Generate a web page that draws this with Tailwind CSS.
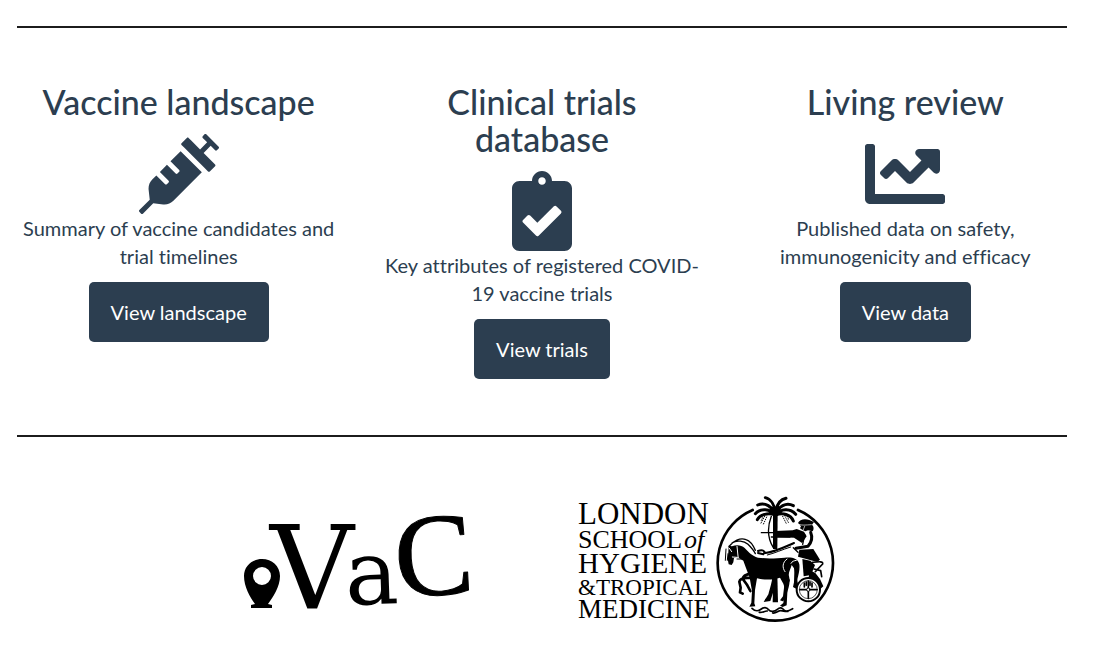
<!DOCTYPE html>
<html lang="en">
<head>
  <meta charset="UTF-8" />
  <meta name="viewport" content="width=device-width, initial-scale=1.0" />
  <title>COVID-19 vaccine tracker</title>
  <script src="https://cdn.jsdelivr.net/npm/@tailwindcss/browser@4"></script>
</head>
<body class="bg-white text-[#2c3e50] font-['Lato',sans-serif] text-[20px] leading-[28px] [font-variant-ligatures:none]">

  <main class="pt-[26px] pl-[17px] pr-[27px]">
    <hr class="border-t-2 border-[#1c1c1c]" />

    <!-- Sections -->
    <div class="grid grid-cols-3 gap-10 pt-[55px] pb-14 items-start text-center">
      <section class="flex flex-col items-center">
        <h2 class="text-[34px] leading-[37px] font-medium mb-[14px]">Vaccine landscape</h2>
        <svg class="size-20" viewBox="0 0 512 512" fill="currentColor" aria-hidden="true">
          <path d="M201.5 174.8l55.7 55.8c3.1 3.1 3.1 8.2 0 11.3l-11.3 11.3c-3.1 3.1-8.2 3.1-11.3 0l-55.7-55.8-45.3 45.3 55.8 55.8c3.1 3.1 3.1 8.2 0 11.3l-11.3 11.3c-3.1 3.1-8.2 3.1-11.3 0L111 265.2l-26.4 26.4c-17.3 17.3-25.6 41.1-23 65.4l7.1 63.6L2.3 487c-3.1 3.1-3.1 8.2 0 11.3l11.3 11.3c3.1 3.1 8.2 3.1 11.3 0l66.3-66.3 63.6 7.1c23.9 2.6 47.9-5.4 65.4-23l181.9-181.9-135.7-135.7-64.9 65zm308.2-93.3L430.5 2.3c-3.1-3.1-8.2-3.1-11.3 0l-11.3 11.3c-3.1 3.1-3.1 8.2 0 11.3l28.3 28.3-45.3 45.3-56.6-56.6-17-17c-3.1-3.1-8.2-3.1-11.3 0l-33.9 33.9c-3.1 3.1-3.1 8.2 0 11.3l17 17L424.8 223l17 17c3.1 3.1 8.2 3.1 11.3 0l33.9-34c3.1-3.1 3.1-8.2 0-11.3l-73.5-73.5 45.3-45.3 28.3 28.3c3.1 3.1 8.2 3.1 11.3 0l11.3-11.3c3.1-3.2 3.1-8.2 0-11.4z" />
        </svg>
        <p class="mb-3">Summary of vaccine candidates and trial timelines</p>
        <a href="#" class="bg-[#2c3e50] text-white px-[22px] py-4 rounded-[5px] hover:bg-[#1e2b37]">View landscape</a>
      </section>

      <section class="flex flex-col items-center">
        <h2 class="text-[34px] leading-[37px] font-medium mb-[14px]">Clinical trials database</h2>
        <svg class="size-20" viewBox="-64 0 512 512" fill="currentColor" aria-hidden="true">
          <path d="M336 64h-80c0-35.3-28.7-64-64-64s-64 28.7-64 64H48C21.5 64 0 85.5 0 112v352c0 26.5 21.5 48 48 48h288c26.5 0 48-21.5 48-48V112c0-26.5-21.5-48-48-48zM192 40c13.3 0 24 10.7 24 24s-10.7 24-24 24-24-10.7-24-24 10.7-24 24-24zm121.2 231.8l-143 141.8c-4.7 4.7-12.3 4.6-17-.1l-82.6-83.3c-4.7-4.7-4.6-12.3.1-17L99.1 285c4.7-4.7 12.3-4.6 17 .1l46 46.4 106-105.2c4.7-4.7 12.3-4.6 17 .1l28.2 28.4c4.7 4.8 4.6 12.3-.1 17z" />
        </svg>
        <p class="mb-3">Key attributes of registered COVID-19 vaccine trials</p>
        <a href="#" class="bg-[#2c3e50] text-white px-[22px] py-4 rounded-[5px] hover:bg-[#1e2b37]">View trials</a>
      </section>

      <section class="flex flex-col items-center">
        <h2 class="text-[34px] leading-[37px] font-medium mb-[14px]">Living review</h2>
        <svg class="size-20" viewBox="0 0 512 512" fill="currentColor" aria-hidden="true">
          <path d="M496 384H64V80c0-8.84-7.16-16-16-16H16C7.16 64 0 71.16 0 80v336c0 17.67 14.33 32 32 32h464c8.84 0 16-7.16 16-16v-32c0-8.84-7.16-16-16-16zM464 96H345.94c-21.38 0-32.09 25.85-16.97 40.97l32.4 32.4L288 242.75l-73.37-73.37c-12.5-12.5-32.76-12.5-45.25 0l-68.69 68.69c-6.25 6.25-6.25 16.38 0 22.63l22.62 22.62c6.25 6.25 16.38 6.25 22.63 0L192 237.25l73.37 73.37c12.5 12.5 32.76 12.5 45.25 0l96-96 32.4 32.4c15.12 15.12 40.97 4.41 40.97-16.97V112c.01-8.84-7.15-16-15.99-16z" />
        </svg>
        <p class="mb-3">Published data on safety, immunogenicity and efficacy</p>
        <a href="#" class="bg-[#2c3e50] text-white px-[22px] py-4 rounded-[5px] hover:bg-[#1e2b37]">View data</a>
      </section>
    </div>

    <hr class="border-t-2 border-[#1c1c1c]" />

    <!-- Logos -->
    <footer class="flex flex-wrap justify-center gap-[104px] pt-14 pb-5 text-black">
      <svg class="w-[228px] h-[132px] overflow-visible" viewBox="0 0 228 132" fill="currentColor" role="img" aria-label="VaC">
        <path fill-rule="evenodd" d="M19 66c10 0 18 7 18 17c0 11-7 21-12 28l4 1v3H8v-3l4-1C7 104 1 94 1 83c0-10 8-17 18-17zm0 8a9 9 0 1 0 0 18a9 9 0 1 0 0-18z" />
        <g stroke="currentColor" stroke-linejoin="round">
          <text x="27" y="116" font-family="DejaVu Serif, serif" font-size="116" stroke-width="0">V</text>
          <text x="102" y="111" font-family="DejaVu Serif, serif" font-size="90" stroke-width="0" transform="rotate(-2 130 90)">a</text>
          <text x="151" y="102" font-family="Liberation Serif, serif" font-size="118" stroke-width="1" transform="rotate(-4 190 60)">C</text>
        </g>
      </svg>

      <div class="flex w-[266px]">
        <svg class="w-[138px] h-[132px] overflow-visible" viewBox="0 0 138 132" fill="currentColor" font-family="Liberation Serif, serif" role="img" aria-label="London School of Hygiene &amp; Tropical Medicine">
          <text x="3" y="31" font-size="31">LONDON</text>
          <text x="3" y="55" font-size="26">SCHOOL<tspan font-style="italic" dx="2">of</tspan></text>
          <text x="3" y="80" font-size="29">HYGIENE</text>
          <text x="3" y="102" font-size="23">&amp;TROPICAL</text>
          <text x="3" y="125" font-size="27">MEDICINE</text>
        </svg>

        <!-- Round seal: palm, horse and chariot -->
        <svg class="w-[128px] h-[132px]" viewBox="9 14 384 396" fill="currentColor" stroke-linecap="round" stroke-linejoin="round" aria-hidden="true">
          <path fill="none" stroke="currentColor" stroke-width="8" d="M128 65A173 173 0 1 0 264 65" />
          <!-- palm -->
          <g fill="none" stroke="currentColor" stroke-width="9">
            <path d="M196 80C188 55 165 40 143 50M196 78C180 62 152 58 136 76M196 80C175 72 150 78 142 94M196 76C194 50 182 32 166 28M197 76C199 50 210 34 228 30M197 78C205 55 228 40 250 52M197 78C213 62 240 58 257 78M197 80C218 72 242 78 250 98" />
          </g>
          <path d="M189 80h14l-1 102h-13z" />
          <path d="M190 258h12l2 84h-16z" />
          <g fill="none" stroke="currentColor" stroke-width="3" stroke-dasharray="2 5">
            <path d="M164 84l-12 22M170 86l-10 22M158 88l-6 12M218 84l12 24M224 82l12 22M232 84l4 10" />
          </g>
          <!-- bow, arrow and archer -->
          <path fill="none" stroke="currentColor" stroke-width="4" d="M184 84C172 115 170 145 190 178M154 133h94M184 146h56" />
          <path d="M196 128l52-2 12-4 22 8 8 14-14 20-24-16-50-2z" />
          <path d="M264 104c4-12 22-14 34-9l14 6-6 8c6 6 6 14 2 20l-14-3-8 3-8-4-8-5 3-6z" />
          <path fill="none" stroke="white" stroke-width="2" d="M266 108c10 4 20 2 38 1M284 114l-4 10" />
          <path fill="none" stroke="currentColor" stroke-width="9" d="M302 132C308 146 306 160 294 174L258 180" />
          <path fill="none" stroke="currentColor" stroke-width="4" d="M284 138l-6 30M250 178l14 14" />
          <path d="M268 184l42-2 20 32-8 7-58-16z" />
          <path d="M277 212l24 5 14 13-12 30-22 4z" />
          <path fill="none" stroke="currentColor" stroke-width="5" d="M308 222C326 220 340 218 338 227L316 250M312 242l20 5 3 18" />
          <path d="M300 246l16 8 14 18 10 22-10 9-12-18-22-18z" />
          <!-- reins -->
          <path fill="none" stroke="currentColor" stroke-width="6" d="M252 164C224 176 198 190 166 194M144 188c8-3 16-3 20 3l-4 7-16-4" />
          <path fill="none" stroke="currentColor" stroke-width="3" d="M242 176C216 184 196 194 172 200" />
          <!-- horse -->
          <path fill="none" stroke="currentColor" stroke-width="4" d="M57 174C70 158 90 147 108 154C122 158 130 172 136 186M66 164C80 154 102 158 114 168C124 178 130 184 136 196" />
          <path d="M56 172l10 2c14-6 28-4 38 5 14 14 22 24 40 29 28 4 56 2 80 0 20-2 40 0 44 20 2 14-2 30-5 41-3 10 3 17 1 25l-6 7-9-5 3-14c0-15 2-29 0-42l-7-10c-3 13-11 22-8 34 5 18-2 34-5 49l-2 38-12 5-8-4 10-8c2-20 7-40 0-58l-10-18c-21 7-48 7-69 2l-6 35-2 40 3 9-18 1 6-12 2-35-7-40-11-29-8-22-16-10-12 2-2 13-5 8-9-2-3-16 2-20z" />
          <path fill="none" stroke="white" stroke-width="3" d="M58 180l7 10M81 174l4 38M67 206l14 1M225 250c-9-12-8-28 6-38M259 216c-7 1-13 3-16 9" />
          <path fill="none" stroke="currentColor" stroke-width="3" d="M48 182l-2 34M54 196l-2 20M58 211l4 8M81 212h18" />
          <path fill="none" stroke="currentColor" stroke-width="8" d="M126 256C106 258 96 264 100 274L112 291L121 308M120 269C104 268 90 270 88 280L92 298L90 312L98 316M192 262C190 286 182 304 179 319L170 334" />
          <path d="M188 258l12 4-2 24-17 52-20 3 5-9 11-8 9-28zM226 266l14 8-8 24-4 33-10 8-8-3 9-12z" />
          <!-- wheel -->
          <circle cx="295" cy="304" r="35" fill="white" stroke="currentColor" stroke-width="6" />
          <circle cx="295" cy="304" r="27" fill="none" stroke="currentColor" stroke-width="2" />
          <path fill="none" stroke="currentColor" stroke-width="5" d="M295 278v52M270 304h50" />
          <path fill="none" stroke="currentColor" stroke-width="5" d="M283 284v12M306 284v12M289 281v10M300 281v10" />
          <circle cx="295" cy="304" r="5" fill="white" stroke="currentColor" stroke-width="3" />
          <!-- ground -->
          <path fill="none" stroke="currentColor" stroke-width="5" d="M126 360c12 12 20 8 28 2s16-6 22 2 18 6 26-1 14-5 20 2 16 2 26-4M148 372c10 2 16-5 24-4M188 374c10 2 16-7 24-7s14 4 22 2" />
        </svg>
      </div>
    </footer>
  </main>

</body>
</html>
